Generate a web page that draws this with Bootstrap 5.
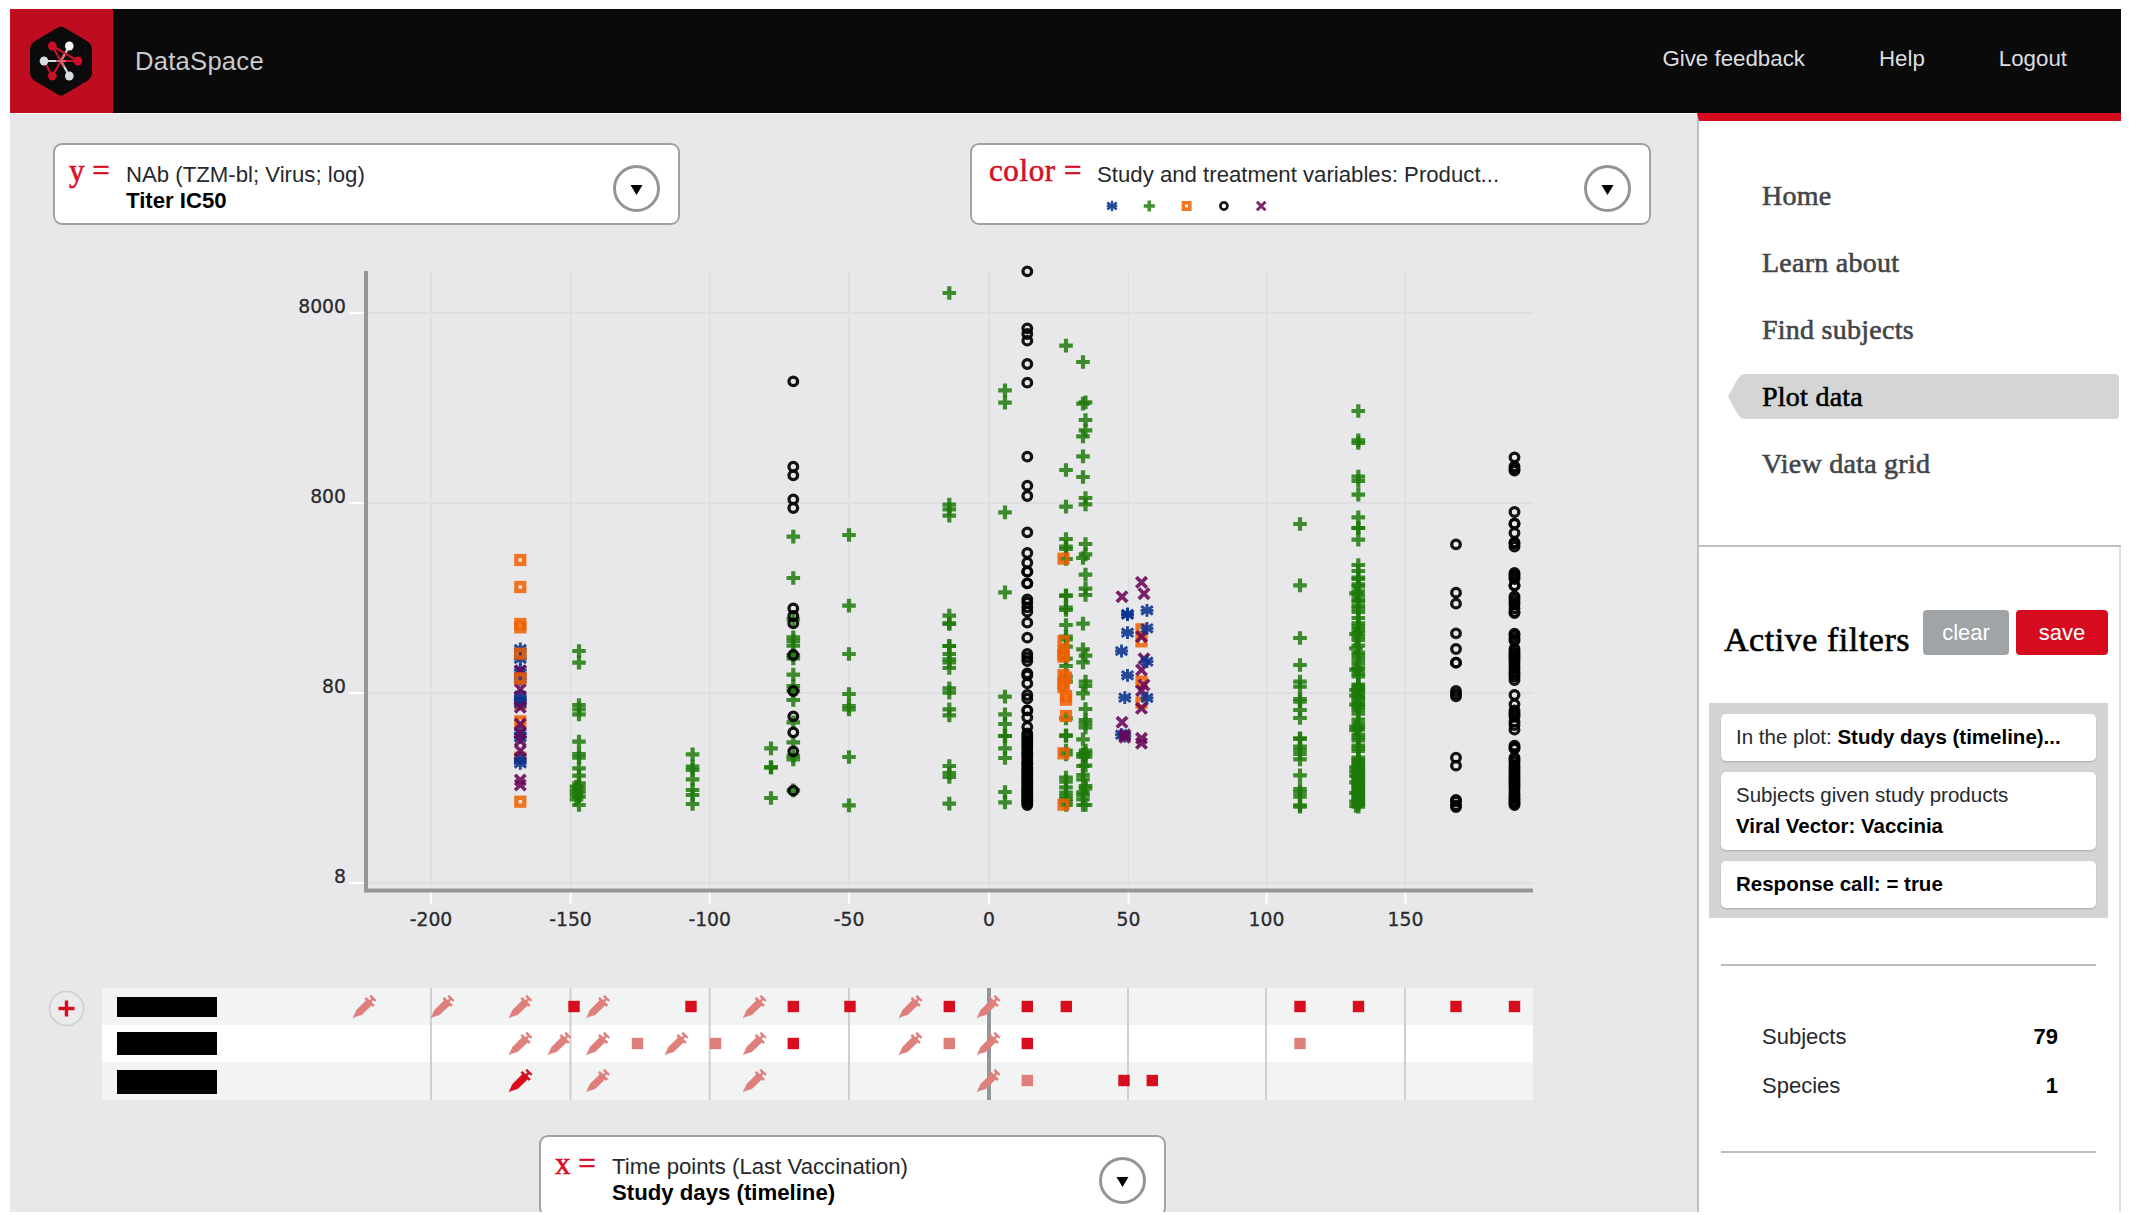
<!DOCTYPE html>
<html lang="en">
<head>
<meta charset="utf-8">
<title>DataSpace</title>
<link rel="stylesheet" href="https://cdn.jsdelivr.net/npm/bootstrap@5.3.0/dist/css/bootstrap.min.css">
<style>
body{font-family:"Liberation Sans",Arial,sans-serif;font-size:22px;color:#26282b;background:#fff;width:2139px;height:1215px;overflow:hidden}
.app{width:2111px;height:1203px;margin:9px 0 0 10px;overflow:hidden}
.topbar{height:104px;background:#0a0a0a;color:#dcdee0}
.logo{width:103px;height:104px;background:#bf0d20}
.brand{font-size:25.6px;letter-spacing:.25px;color:#c9cbcd;margin-left:22px;margin-top:1px}
.toplinks{font-size:22.3px;gap:74px;margin-right:54px;margin-top:-5px}
.toplinks a,.sidenav a{color:inherit;text-decoration:none}
.workspace{width:1687px;background:#e8e8ea;border-top:1px solid #fff}
.side{width:424px;background:#fff;border-left:2px solid #bfc0c3;border-top:8px solid #d60c1e}
.selectors{padding:29px 46px 0 43px}
.picker{height:82px;background:#fff;border:2px solid #a0a2a5;border-radius:9px;padding:0 18px 0 14px}
.picker-y,.picker-x{width:627px}
.picker-c{width:681px;padding-left:17px}
.picker-x{margin-left:529px;flex:none}
.axis{font-family:"Liberation Serif",Georgia,serif;color:#d80e26;font-size:31px;line-height:34px;margin-top:9px;white-space:pre;flex:none;-webkit-text-stroke:.6px}
.axis-y{width:57px}.axis-c{width:108px;letter-spacing:.6px}.axis-x{width:57px}
.axis-x{margin-top:10px}
.desc{font-size:22.2px;line-height:26px;margin-top:17px;white-space:nowrap}
.desc b,.pill b,.stat b{color:#000}
.drop{width:47px;height:47px;border:3px solid #929598;border-radius:50%;flex:none;margin-top:20px}
svg{display:block;flex:none}
#legend{margin-top:10px}
#timeline{overflow:visible}
.plot text{font-family:"DejaVu Sans",Verdana,sans-serif;font-size:18.8px;fill:#2a2b2d;stroke:#2a2b2d;stroke-width:.3px}
.sidenav{padding:52px 2px 0 29px;height:426px;border-bottom:2px solid #bfc0c3}
.sidenav a{display:block;height:45px;line-height:45px;margin-bottom:22px;padding-left:34px;font-family:"Liberation Serif",Georgia,serif;font-size:28px;letter-spacing:.25px;color:#424548;-webkit-text-stroke:.6px}
.sidenav .current{color:#000;background:#d4d6d5;border-radius:4px;clip-path:polygon(0 50%,9px 6px,13px 1px,17px 0,100% 0,100% 100%,17px 100%,13px 44px,9px 39px)}
.summary{border-right:2px solid #dedee0;height:670px;padding:63px 11px 0 10px}
.ftitle{font-family:"Liberation Serif",Georgia,serif;font-size:34px;line-height:44px;letter-spacing:.55px;color:#000;margin:8px 0 0 15px;-webkit-text-stroke:.6px;white-space:nowrap}
.fbtn{border:0;border-radius:4px;height:45px;font-size:22px;line-height:44px;padding:0;color:#fff}
.fbtn-clear{width:86px;background:#a0a4a7;margin-right:7px}
.fbtn-save{width:92px;background:#d60b1f}
.pills{background:#d3d5d4;padding:11px 12px;margin-top:41px;gap:11px;width:399px;height:215px}
.pill{background:#fff;border-radius:5px;padding:7px 15px 9px;font-size:20.5px;line-height:31px;box-shadow:0 1px 2px #aaa;white-space:nowrap}
.stats{margin:46px 12px 0 12px;width:375px;height:189px;border-top:2px solid #bdbec0;border-bottom:2px solid #bdbec0;padding:47px 38px 0 41px}
.stat{height:48.5px;line-height:48px}
</style>
</head>
<body>
<div class="app">
  <header class="topbar d-flex align-items-center justify-content-between">
    <div class="d-flex align-items-center">
      <div class="logo"><svg width="103" height="104" viewBox="10 9 103 104">
        <path d="M57 28Q61 25 65 28L87 41Q92 44 92 50V72Q92 78 87 81L65 94Q61 97 57 94L35 81Q30 78 30 72V50Q30 44 35 41Z" fill="#0b0b0b"/>
        <g stroke-width="2.2" fill="none"><path d="M69.3 46L61 61L69.3 76M44 61H61" stroke="#d5dade"/><path d="M52.3 46L61 61L52.3 76L44 61M52.3 46L78 61H61L52.3 76" stroke="#c5142a"/><path d="M56 61H66M61 61L64 55M61 61L64 67" stroke="#d8656d"/></g>
        <g fill="#cf0d24"><ellipse cx="52.3" cy="46" rx="4.3" ry="4.6"/><ellipse cx="78" cy="61" rx="4.3" ry="4.6"/><ellipse cx="52.3" cy="76" rx="4.3" ry="4.6"/></g>
        <g fill="#d8dde1"><ellipse cx="69.3" cy="46" rx="4.3" ry="4.6" fill="#f5f8fa"/><ellipse cx="44" cy="61" rx="4.3" ry="4.6"/><ellipse cx="69.3" cy="76" rx="4.3" ry="4.6"/></g>
      </svg></div>
      <div class="brand">DataSpace</div>
    </div>
    <nav class="toplinks d-flex"><a href="#">Give feedback</a><a href="#">Help</a><a href="#">Logout</a></nav>
  </header>
  <div class="d-flex" style="height:1099px">
    <main class="workspace d-flex flex-column">
      <div class="selectors d-flex justify-content-between">
        <div class="picker picker-y d-flex"><span class="axis axis-y">y =</span>
          <div class="desc flex-grow-1"><div>NAb (TZM-bl; Virus; log)</div><b>Titer IC50</b></div>
          <div class="drop"><svg width="41" height="41"><path d="M14.500 17H26.500L20.500 27Z"/></svg></div></div>
        <div class="picker picker-c d-flex"><span class="axis axis-c">color =</span>
          <div class="desc flex-grow-1"><div>Study and treatment variables: Product...</div>
            <svg id="legend" width="170" height="18" viewBox="1097 195 170 18"></svg></div>
          <div class="drop"><svg width="41" height="41"><path d="M14.500 17H26.500L20.500 27Z"/></svg></div></div>
      </div>
      <svg class="plot" id="plot" width="1687" height="763" viewBox="10 225 1687 763"></svg>
      <svg id="timeline" width="1687" height="147" viewBox="10 988 1687 147"></svg>
      <div class="picker picker-x d-flex"><span class="axis axis-x">x =</span>
        <div class="desc flex-grow-1"><div>Time points (Last Vaccination)</div><b>Study days (timeline)</b></div>
        <div class="drop"><svg width="41" height="41"><path d="M14.500 17H26.500L20.500 27Z"/></svg></div></div>
    </main>
    <aside class="side">
      <nav class="sidenav"><a href="#">Home</a><a href="#">Learn about</a><a href="#">Find subjects</a><a href="#" class="current">Plot data</a><a href="#">View data grid</a></nav>
      <section class="summary">
        <div class="d-flex"><div class="ftitle flex-grow-1">Active filters</div><button class="btn fbtn fbtn-clear">clear</button><button class="btn fbtn fbtn-save">save</button></div>
        <div class="pills d-flex flex-column">
          <div class="pill">In the plot: <b>Study days (timeline)...</b></div>
          <div class="pill">Subjects given study products<br><b>Viral Vector: Vaccinia</b></div>
          <div class="pill"><b>Response call: = true</b></div>
        </div>
        <div class="stats">
          <div class="stat d-flex justify-content-between"><span>Subjects</span><b>79</b></div>
          <div class="stat d-flex justify-content-between"><span>Species</span><b>1</b></div>
        </div>
      </section>
    </aside>
  </div>
</div>
<script src="https://cdn.jsdelivr.net/npm/bootstrap@5.3.0/dist/js/bootstrap.bundle.min.js"></script>
<script>
const shape = {
  plus:(x,y)=>`<path d="M${x-6.8} ${y}h13.6M${x} ${y-6.8}v13.6" stroke="#1d7a08" stroke-width="4.2" opacity=".84"/>`,
  ring:(x,y)=>`<circle cx="${x}" cy="${y}" r="4.3" fill="none" stroke="#000" stroke-width="3.3" opacity=".92"/>`,
  box:(x,y)=>`<rect x="${x-3.9}" y="${y-3.9}" width="7.8" height="7.8" fill="none" stroke="#f06000" stroke-width="4.4" opacity=".86"/>`,
  cross:(x,y)=>`<path d="M${x-5.2} ${y-5.2}l10.4 10.4m0-10.4l-10.4 10.4" stroke="#690758" stroke-width="3.7" opacity=".88"/>`,
  star:(x,y)=>`<path d="M${x} ${y-6.4}v12.8M${x-5.8} ${y-4.2}l11.600 8.400m0-8.400l-11.600 8.400M${x-6.400} ${y}h12.800" stroke="#093390" stroke-width="2.9" opacity=".88"/>`
};
// Series: symbol, x, base y, offsets from the base in thirds of a pixel.
const series = [
 ['box',520.3,530,[90,171,282,292,371,445,520,574,683,815]],
 ['star',520.3,530,[357,387,420,447,497,512,520,610,622,685,700]],
 ['cross',520.3,530,[422,478,532,582,608,632,662,750,765]],
 ['box',520.3,530,[371,445]],
 ['plus',579,530,[363,398,525,538,553,635,672,683,715,737,760,772,785,800,825]],
 ['plus',576.5,530,[770,783,795,808]],
 ['plus',692.6,530,[673,710,720,748,780,795,822]],
 ['plus',771,360,[1165,1222,1222,1314]],
 ['plus',793.3,360,[530,654,778,832,843,857,885,895,944,978,992,1020,1087,1147,1188,1198,1291]],
 ['ring',793.3,360,[64,320,346,418,444,745,768,790,885,993,1069,1117,1174,1292]],
 ['plus',849,360,[525,737,882,1002,1038,1048,1191,1336]],
 ['plus',949.3,250,[129]],
 ['plus',949.3,360,[434,448,467,767,791,791,858,858,882,898,907,924,985,998,1048,1066,1218,1239,1251,1331]],
 ['plus',1005,360,[91,128,457,697,1010,1063,1092,1128,1128,1165,1194,1296,1327]],
 ['ring',1027.3,250,[64,235,252,272,342,398,620,707,738,847]],
 ['ring',1027.3,540,[39,68,95,95,130,130,178,188,202,215,248,293,342,352,363,400,406,430,465,476,511,511,532,561,580,588,596,604,612,620,628,638,643,651,660,668,672,681,688,695,700,706,714,719,725,730,738,742,748,753,758,764,769,773,779,783,789,795]],
 ['plus',1066,250,[287,660,770,867]],
 ['plus',1066,540,[20,27,57,167,167,203,210,255,290,298,320,356,378,410,425,535,587,587,632,643,713,725,742,758,768,777,785,795]],
 ['plus',1083,250,[336,461,559,619,681]],
 ['plus',1085.5,250,[457,510,541,744,763,882]],
 ['plus',1085.5,540,[43,104,146,165,347,425,438,507,540,550,562,632,640,650,677,738,745,795]],
 ['plus',1083,540,[54,251,328,367,460,598,642,650,678,705,718,757,765,778,795]],
 ['box',1063.500,540,[56,303,335,344,350,405,430,441,640,794]],
 ['box',1066,540,[413,468,479,528]],
 ['box',1141.500,540,[268,304,425,488]],
 ['cross',1141.500,540,[127,290,390,452,505,595,610]],
 ['cross',1144,540,[161,356,435]],['cross',1122,540,[170,547]],
 ['star',1147,540,[211,265,365,474]],
 ['star',1127.500,540,[222,224,278,406]],['star',1121.500,540,[333,584]],['star',1124.800,540,[473,588]],
 ['cross',1124.800,540,[584,592]],
 ['plus',1300,380,[432,616,774,855,905,920,957,965,990,1014,1076,1076,1100,1110,1122,1138,1186,1227,1238,1250,1276,1280]],
 ['plus',1358.300,380,[93,181,189,290,303,344,412,444,444,479,555,573,593,597,613,619,634,646,659,665,678,685,696,714,730,739,749,758,770,780,797,818,827,837,849,862,869,881,889,914,919,926,932,938,947,953,960,969,975,982,990,1001,1019,1031,1041,1048,1064,1073,1081,1097,1105,1113,1133,1139,1144,1150,1157,1163,1169,1174,1180,1185,1190,1196,1201,1207,1213,1218,1224,1229,1235,1240,1246,1251,1257,1262,1268,1274,1280]],
 ['plus',1356,380,[640,762,805,869,930,947,974,1040,1050,1162,1175,1188,1207,1239,1265,1278]],
 ['ring',1456,380,[493,638,671,760,807,848,848,933,942,949,1133,1157,1260,1264,1276,1281]],
 ['ring',1514.500,380,[232,259,266,272,396,431,431,459,487,491,500,579,585,590,597,616,617,649,656,665,673,685,696,699,761,766,775,782,806,814,821,827,834,840,848,858,866,876,883,890,900,945,973,991,998,1004,1010,1025,1035,1049,1097,1102,1106,1133,1140,1147,1157,1165,1173,1180,1187,1194,1200,1207,1214,1221,1230,1240,1246,1253,1259,1265,1270,1275]]
];
const ticks=[[431,-200],[570.500,-150],[709.700,-100],[849,-50],[989,0],[1128.500,50],[1266.500,100],[1405.500,150]];
let s='';
for(const [x] of ticks) s+=`<path d="M${x} 271V888" stroke="#dedfe1" stroke-width="2"/><path d="M${x} 892V904" stroke="#fff" stroke-width="2"/>`;
for(const [y,t] of [[313,8000],[503,800],[693,80],[883,8]]) s+=`<path d="M367 ${y}H1533" stroke="#dedfe1" stroke-width="2"/><path d="M349 ${y}h15" stroke="#fff" stroke-width="2"/><text x="346" y="${y-.5}" text-anchor="end">${t}</text>`;
for(const [x,t] of ticks) s+=`<text x="${x}" y="926" text-anchor="middle">${t}</text>`;
s+='<path d="M366 271V892M364 890.500H1533" fill="none" stroke="#979597" stroke-width="4"/>';
for(const [k,x,b,v] of series) for(const d of v) s+=shape[k](x,b+d/3);
document.getElementById('plot').innerHTML=s;

document.getElementById('legend').innerHTML=['star','plus','box','ring','cross'].map((k,i)=>`<g transform="translate(${1112+i*37.300} 203) scale(.82)">${shape[k](0,0)}</g>`).join('');

// Study timelines: s = vaccination, m = measurement, capital letters = highlighted.
const rows=[
 {top:988,h:37,y:1006.500,bar:[997,20],s:[364.500,442.500,520.500,598,754.700,910.500,988.600],S:[],m:[],M:[574,691,793.300,850,949.300,1027.300,1066.300,1300,1358.500,1456,1514.500]},
 {top:1025,h:37,y:1043.500,bar:[1032,23],s:[520.500,559.500,598,676.500,754.700,910.500,988.600],S:[],m:[637.500,715.500,949.300,1300],M:[793.300,1027.300]},
 {top:1062,h:38,y:1080.500,bar:[1070,24],s:[598,754.700,988.600],S:[520.500],m:[1027.300],M:[1124,1152.300]}];
const syringe=(x,y,c)=>`<path transform="translate(${x} ${y})" fill="${c}" stroke="${c}" stroke-width=".5" d="M-11.500 11.500L-7.900 3.600L1.600-5.900L.4-7.900L1.800-9.300L10-1.400L8.600 0L6.800-1L-2.800 8.200L-9.500 10.300ZM4.300-5.200L7-7.800L5.300-9.800L6.500-11.500L11.700-6.300L10.500-5.100L8.700-6.600L5.800-3.800Z"/>`;
let t='';
rows.forEach((r,i)=>t+=`<rect x="102" y="${r.top}" width="1431" height="${r.h}" fill="${i==1?'#fff':'#f2f4f3'}"/><rect x="117" y="${r.bar[0]}" width="100" height="${r.bar[1]}"/>`);
for(const [x,v] of ticks) t+=`<path d="M${v>0?x-.5:x} 988V1100" stroke="${v?'#cdcfd0':'#94979a'}" stroke-width="${v?2:4}"/>`;
for(const r of rows){
 for(const [k,c] of [['m','#de7f7c'],['M','#d80d1d']]) for(const x of r[k]) t+=`<rect x="${x-5.700}" y="${r.y-5.700}" width="11.400" height="11.400" fill="${c}"/>`;
 for(const x of r.s) t+=syringe(x,r.y,'#de7f7c');
 for(const x of r.S) t+=syringe(x,r.y,'#d80d1d');
}
t+='<circle cx="66.500" cy="1008.500" r="17" fill="#ebebed" stroke="#cecfd1" stroke-width="1.600"/><path d="M58.500 1008.500h16M66.500 1000.500v16" stroke="#d80d1d" stroke-width="3.400"/>';
document.getElementById('timeline').innerHTML=t;
</script>
</body>
</html>
